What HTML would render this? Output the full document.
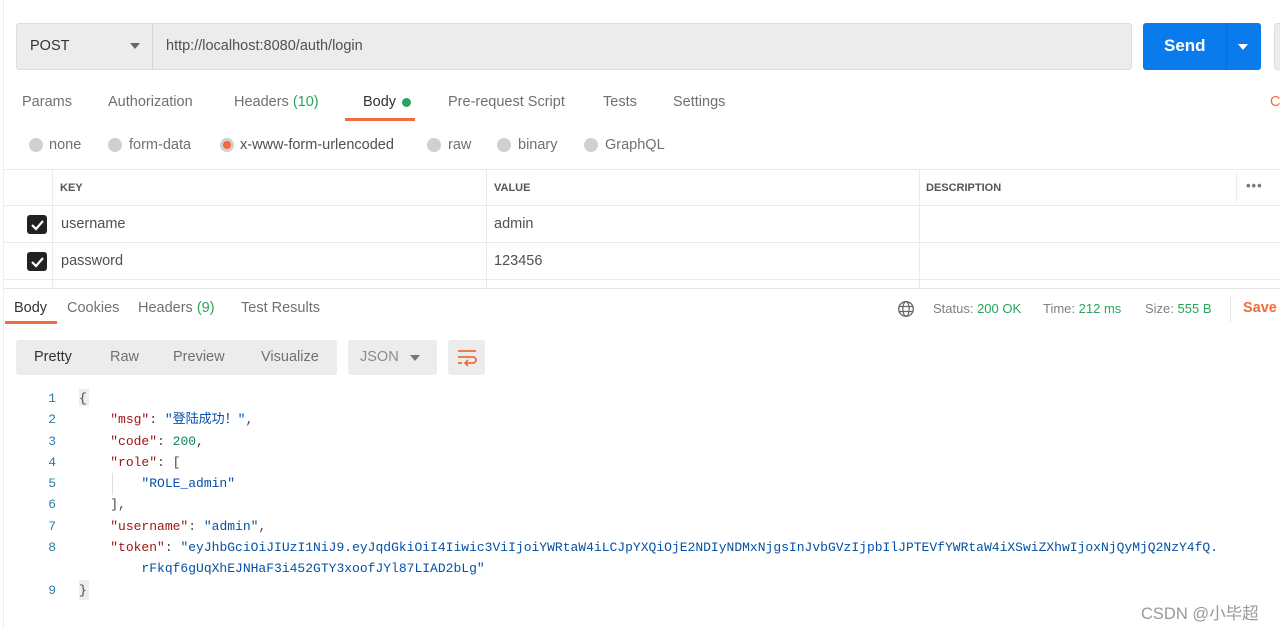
<!DOCTYPE html>
<html><head><meta charset="utf-8"><style>
*{box-sizing:border-box;margin:0;padding:0}
body{width:1280px;height:629px;overflow:hidden;background:#fff;font-family:"Liberation Sans",sans-serif;color:#505050;position:relative;font-size:14.5px}
.a{position:absolute;white-space:nowrap}
.g{color:#26a65b}
.mono{font-family:"Liberation Mono","Noto Sans CJK SC",monospace;font-size:13px}
</style></head><body>
<div class="a" style="left:3px;top:0;width:1px;height:629px;background:#eee"></div>
<div class="a" style="left:16px;top:23px;width:1116px;height:47px;background:#ececec;border:1px solid #ddd;border-radius:3px"></div>
<div class="a" style="left:152px;top:24px;width:1px;height:45px;background:#d8d8d8"></div>
<div class="a" style="left:30px;top:38px;color:#333">POST</div>
<div class="a" style="left:130px;top:43px;border-left:5px solid transparent;border-right:5px solid transparent;border-top:6px solid #666"></div>
<div class="a" style="left:166px;top:38px;color:#505050">http://localhost:8080/auth/login</div>
<div class="a" style="left:1143px;top:23px;width:118px;height:47px;background:#097bed;border-radius:3px"></div>
<div class="a" style="left:1226px;top:23px;width:1px;height:47px;background:#0a6fd4"></div>
<div class="a" style="left:1164px;top:36px;font-size:17px;color:#fff;font-weight:bold">Send</div>
<div class="a" style="left:1238px;top:44px;border-left:5px solid transparent;border-right:5px solid transparent;border-top:6px solid #fff"></div>
<div class="a" style="left:1274px;top:23px;width:8px;height:47px;background:#ececec;border:1px solid #ddd;border-radius:3px"></div>
<div class="a" style="top:94px;left:22px;color:#707070">Params</div>
<div class="a" style="top:94px;left:108px;color:#707070">Authorization</div>
<div class="a" style="top:94px;left:234px;color:#707070">Headers <span class="g">(10)</span></div>
<div class="a" style="top:94px;left:363px;color:#333">Body</div>
<div class="a" style="top:98px;left:402px;width:9px;height:9px;border-radius:50%;background:#26a65b"></div>
<div class="a" style="top:118px;left:345px;width:70px;height:3px;background:#f26b3a"></div>
<div class="a" style="top:94px;left:448px;color:#707070">Pre-request Script</div>
<div class="a" style="top:94px;left:603px;color:#707070">Tests</div>
<div class="a" style="top:94px;left:673px;color:#707070">Settings</div>
<div class="a" style="top:94px;left:1270px;color:#f26b3a">C</div>
<div class="a" style="top:138px;left:29px;width:14px;height:14px;border-radius:50%;background:#d0d0d0"></div>
<div class="a" style="top:137px;left:49px;color:#707070">none</div>
<div class="a" style="top:138px;left:108px;width:14px;height:14px;border-radius:50%;background:#d0d0d0"></div>
<div class="a" style="top:137px;left:129px;color:#707070">form-data</div>
<div class="a" style="top:138px;left:220px;width:14px;height:14px;border-radius:50%;background:#d0d0d0"></div>
<div class="a" style="top:141px;left:223px;width:8px;height:8px;border-radius:50%;background:#f26b3a"></div>
<div class="a" style="top:137px;left:240px;color:#505050">x-www-form-urlencoded</div>
<div class="a" style="top:138px;left:427px;width:14px;height:14px;border-radius:50%;background:#d0d0d0"></div>
<div class="a" style="top:137px;left:448px;color:#707070">raw</div>
<div class="a" style="top:138px;left:497px;width:14px;height:14px;border-radius:50%;background:#d0d0d0"></div>
<div class="a" style="top:137px;left:518px;color:#707070">binary</div>
<div class="a" style="top:138px;left:584px;width:14px;height:14px;border-radius:50%;background:#d0d0d0"></div>
<div class="a" style="top:137px;left:605px;color:#707070">GraphQL</div>
<div class="a" style="top:169px;left:4px;width:1276px;height:1px;background:#eaeaea"></div>
<div class="a" style="top:205px;left:4px;width:1276px;height:1px;background:#eaeaea"></div>
<div class="a" style="top:242px;left:4px;width:1276px;height:1px;background:#eaeaea"></div>
<div class="a" style="top:279px;left:4px;width:1276px;height:1px;background:#eaeaea"></div>
<div class="a" style="top:288px;left:4px;width:1276px;height:1px;background:#e5e5e5"></div>
<div class="a" style="top:169px;left:52px;width:1px;height:119px;background:#eaeaea"></div>
<div class="a" style="top:169px;left:486px;width:1px;height:119px;background:#eaeaea"></div>
<div class="a" style="top:169px;left:919px;width:1px;height:119px;background:#eaeaea"></div>
<div class="a" style="top:172px;left:1236px;width:1px;height:30px;background:#eaeaea"></div>
<div class="a" style="top:182px;left:60px;font-size:11px;font-weight:bold;color:#555">KEY</div>
<div class="a" style="top:182px;left:494px;font-size:11px;font-weight:bold;color:#555">VALUE</div>
<div class="a" style="top:182px;left:926px;font-size:11px;font-weight:bold;color:#555">DESCRIPTION</div>
<div class="a" style="top:178px;left:1246px;font-size:13px;font-weight:bold;color:#777;letter-spacing:1px">•••</div>
<div class="a" style="top:215px;left:27px;width:20px;height:19px;background:#222;border-radius:3px"></div>
<svg class="a" style="top:215px;left:27px" width="20" height="19"><path d="M5 10l4 4 7-8" stroke="#fff" stroke-width="2.2" fill="none"/></svg>
<div class="a" style="top:252px;left:27px;width:20px;height:19px;background:#222;border-radius:3px"></div>
<svg class="a" style="top:252px;left:27px" width="20" height="19"><path d="M5 10l4 4 7-8" stroke="#fff" stroke-width="2.2" fill="none"/></svg>
<div class="a" style="top:216px;left:61px;color:#505050">username</div>
<div class="a" style="top:253px;left:61px;color:#505050">password</div>
<div class="a" style="top:216px;left:494px;color:#505050">admin</div>
<div class="a" style="top:253px;left:494px;color:#505050">123456</div>
<div class="a" style="top:300px;left:14px;color:#333">Body</div>
<div class="a" style="top:321px;left:5px;width:52px;height:3px;background:#f26b3a"></div>
<div class="a" style="top:300px;left:67px;color:#707070">Cookies</div>
<div class="a" style="top:300px;left:138px;color:#707070">Headers <span class="g">(9)</span></div>
<div class="a" style="top:300px;left:241px;color:#707070">Test Results</div>
<svg class="a" style="top:300px;left:897px" width="18" height="18"><circle cx="9" cy="9" r="7.3" fill="none" stroke="#666" stroke-width="1.3"/><ellipse cx="9" cy="9" rx="3.2" ry="7.3" fill="none" stroke="#666" stroke-width="1.2"/><path d="M2 6.5h14M2 11.5h14" stroke="#666" stroke-width="1.2"/></svg>
<div class="a" style="top:301px;left:933px;font-size:13px;color:#808080">Status: <span class="g">200 OK</span></div>
<div class="a" style="top:301px;left:1043px;font-size:13px;color:#808080">Time: <span class="g">212 ms</span></div>
<div class="a" style="top:301px;left:1145px;font-size:13px;color:#808080">Size: <span class="g">555 B</span></div>
<div class="a" style="top:296px;left:1230px;width:1px;height:26px;background:#e5e5e5"></div>
<div class="a" style="top:300px;left:1243px;color:#f26b3a;font-weight:bold">Save</div>
<div class="a" style="top:340px;left:16px;width:321px;height:35px;background:#ececec;border-radius:3px"></div>
<div class="a" style="top:349px;left:34px;color:#333">Pretty</div>
<div class="a" style="top:349px;left:110px;color:#707070">Raw</div>
<div class="a" style="top:349px;left:173px;color:#707070">Preview</div>
<div class="a" style="top:349px;left:261px;color:#707070">Visualize</div>
<div class="a" style="top:340px;left:348px;width:89px;height:35px;background:#ececec;border-radius:3px"></div>
<div class="a" style="top:349px;left:360px;color:#8a8a8a">JSON</div>
<div class="a" style="top:355px;left:410px;border-left:5px solid transparent;border-right:5px solid transparent;border-top:6px solid #777"></div>
<div class="a" style="top:340px;left:448px;width:37px;height:35px;background:#ececec;border-radius:3px"></div>
<svg class="a" style="top:346px;left:455px" width="24" height="22"><path d="M3 5h18M3 11h15a3 3 0 0 1 0 6h-7M3 17h4" stroke="#f26b3a" stroke-width="1.8" fill="none"/><path d="M13 14l-3 3 3 3" stroke="#f26b3a" stroke-width="1.6" fill="none"/></svg>
<div class="a" style="top:389px;left:79px;width:10px;height:17px;background:#eee"></div>
<div class="a" style="top:580px;left:79px;width:10px;height:20px;background:#eee"></div>
<div class="a" style="top:473px;left:112px;width:1px;height:22px;background:#ddd"></div>
<div class="a mono" style="top:388px;left:40px;line-height:21.3px;color:#2a7fa8;text-align:right;width:16px">1<br>2<br>3<br>4<br>5<br>6<br>7<br>8<br><br>9</div>
<div class="a mono" style="top:388px;left:79px;line-height:21.3px;color:#444">{<br>
&nbsp;&nbsp;&nbsp;&nbsp;<span style="color:#a31515">"msg"</span>: <span style="color:#0451a5">"登陆成功！"</span>,<br>
&nbsp;&nbsp;&nbsp;&nbsp;<span style="color:#a31515">"code"</span>: <span style="color:#098658">200</span>,<br>
&nbsp;&nbsp;&nbsp;&nbsp;<span style="color:#a31515">"role"</span>: [<br>
&nbsp;&nbsp;&nbsp;&nbsp;&nbsp;&nbsp;&nbsp;&nbsp;<span style="color:#0451a5">"ROLE_admin"</span><br>
&nbsp;&nbsp;&nbsp;&nbsp;],<br>
&nbsp;&nbsp;&nbsp;&nbsp;<span style="color:#a31515">"username"</span>: <span style="color:#0451a5">"admin"</span>,<br>
&nbsp;&nbsp;&nbsp;&nbsp;<span style="color:#a31515">"token"</span>: <span style="color:#0451a5">"eyJhbGciOiJIUzI1NiJ9.eyJqdGkiOiI4Iiwic3ViIjoiYWRtaW4iLCJpYXQiOjE2NDIyNDMxNjgsInJvbGVzIjpbIlJPTEVfYWRtaW4iXSwiZXhwIjoxNjQyMjQ2NzY4fQ.</span><br>
<span style="color:#0451a5">&nbsp;&nbsp;&nbsp;&nbsp;&nbsp;&nbsp;&nbsp;&nbsp;rFkqf6gUqXhEJNHaF3i452GTY3xoofJYl87LIAD2bLg"</span><br>
}</div>
<div class="a" style="top:600px;left:1141px;font-size:16.5px;color:#999;font-family:'Liberation Sans','Noto Sans CJK SC',sans-serif">CSDN @小毕超</div>
</body></html>
